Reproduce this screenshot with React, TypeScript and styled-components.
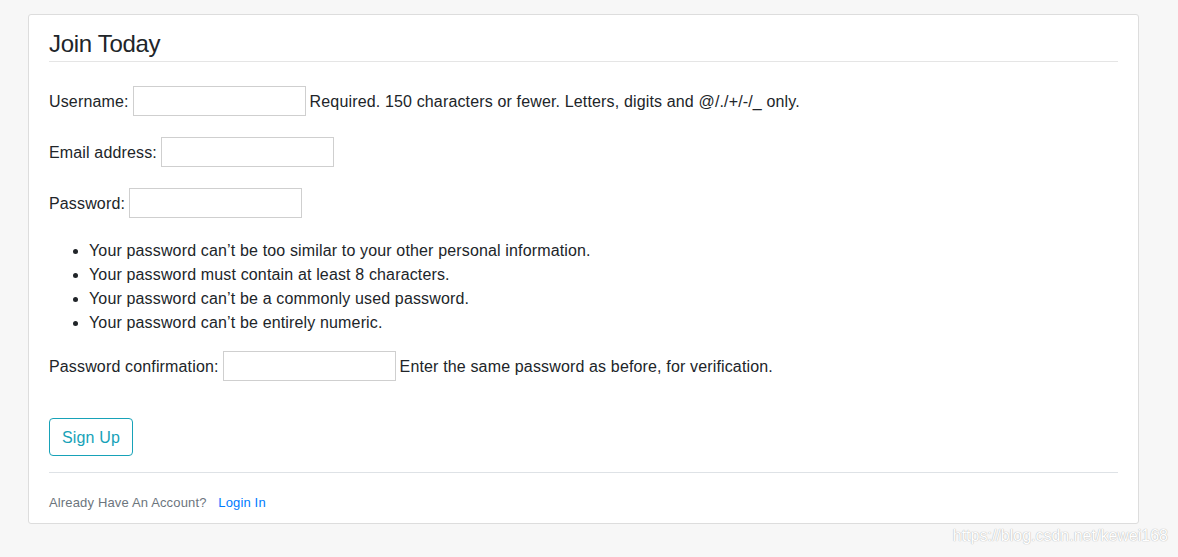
import * as React from 'react';
import styled, { createGlobalStyle } from 'styled-components';

const GlobalStyle = createGlobalStyle`
  html, body {
    margin: 0;
    padding: 0;
    background: #f7f7f7;
  }
  body {
    font-family: "Liberation Sans", Arial, sans-serif;
    font-size: 16px;
    line-height: 1.5;
    letter-spacing: 0.15px;
    color: #212529;
  }
`;

const Page = styled.div`
  position: relative;
  width: 1178px;
  height: 557px;
  padding-top: 14px;
  box-sizing: border-box;
`;

const Card = styled.div`
  width: 1111px;
  margin-left: 28px;
  box-sizing: border-box;
  padding: 10px 20px 9px;
  background: #fff;
  border: 1px solid #dddddd;
  border-radius: 3px;
`;

const Legend = styled.div`
  font-size: 24px;
  line-height: 1.2;
  letter-spacing: -0.3px;
  padding: 5px 0 2px;
  border-bottom: 1px solid rgba(0, 0, 0, 0.1);
  margin-bottom: 24px;
`;

const Field = styled.div<{ $gap?: number }>`
  display: flex;
  align-items: center;
  gap: 4px;
  height: 30px;
  margin-bottom: ${(p) => p.$gap ?? 21}px;
`;

const Label = styled.label`
  white-space: nowrap;
  padding-top: 2px;
`;

const Input = styled.input`
  width: 173px;
  height: 30px;
  box-sizing: border-box;
  border: 1px solid #cfcfcf;
  border-radius: 0;
  padding: 2px 4px;
  font: inherit;
  outline: none;
`;

const Help = styled.span`
  white-space: nowrap;
  padding-top: 2px;
`;

const HelpList = styled.ul`
  margin: 1px 0 16px;
  padding-left: 40px;
  line-height: 24px;
`;

const Button = styled.button`
  display: block;
  margin: 37px 0 16px;
  font: inherit;
  letter-spacing: inherit;
  line-height: 24px;
  padding: 7px 12px 5px;
  color: #17a2b8;
  background: transparent;
  border: 1px solid #17a2b8;
  border-radius: 4px;
`;

const Footer = styled.div`
  border-top: 1px solid #dee2e6;
  padding-top: 17px;
  line-height: 23px;
`;

const Muted = styled.small`
  font-size: 13px;
  color: #6c757d;
`;

const Link = styled.a`
  margin-left: 8px;
  color: #007bff;
  text-decoration: none;
`;

const Watermark = styled.div`
  position: absolute;
  right: 10px;
  bottom: 9px;
  font-size: 16px;
  letter-spacing: 0;
  color: #ffffff;
  text-shadow: 0 0 1px #b0b0b0, 0 0 1px #c8c8c8;
`;

export default function App() {
  return (
    <>
      <GlobalStyle />
      <Page>
        <Card>
          <Legend>Join Today</Legend>
          <Field>
            <Label>Username:</Label>
            <Input type="text" />
            <Help>Required. 150 characters or fewer. Letters, digits and @/./+/-/_ only.</Help>
          </Field>
          <Field>
            <Label>Email address:</Label>
            <Input type="email" />
          </Field>
          <Field>
            <Label>Password:</Label>
            <Input type="password" />
          </Field>
          <HelpList>
            <li>Your password can’t be too similar to your other personal information.</li>
            <li>Your password must contain at least 8 characters.</li>
            <li>Your password can’t be a commonly used password.</li>
            <li>Your password can’t be entirely numeric.</li>
          </HelpList>
          <Field $gap={0}>
            <Label>Password confirmation:</Label>
            <Input type="password" />
            <Help>Enter the same password as before, for verification.</Help>
          </Field>
          <Button type="submit">Sign Up</Button>
          <Footer>
            <Muted>
              Already Have An Account?{' '}
              <Link href="#">Login In</Link>
            </Muted>
          </Footer>
        </Card>
        <Watermark>https://blog.csdn.net/kewei168</Watermark>
      </Page>
    </>
  );
}
